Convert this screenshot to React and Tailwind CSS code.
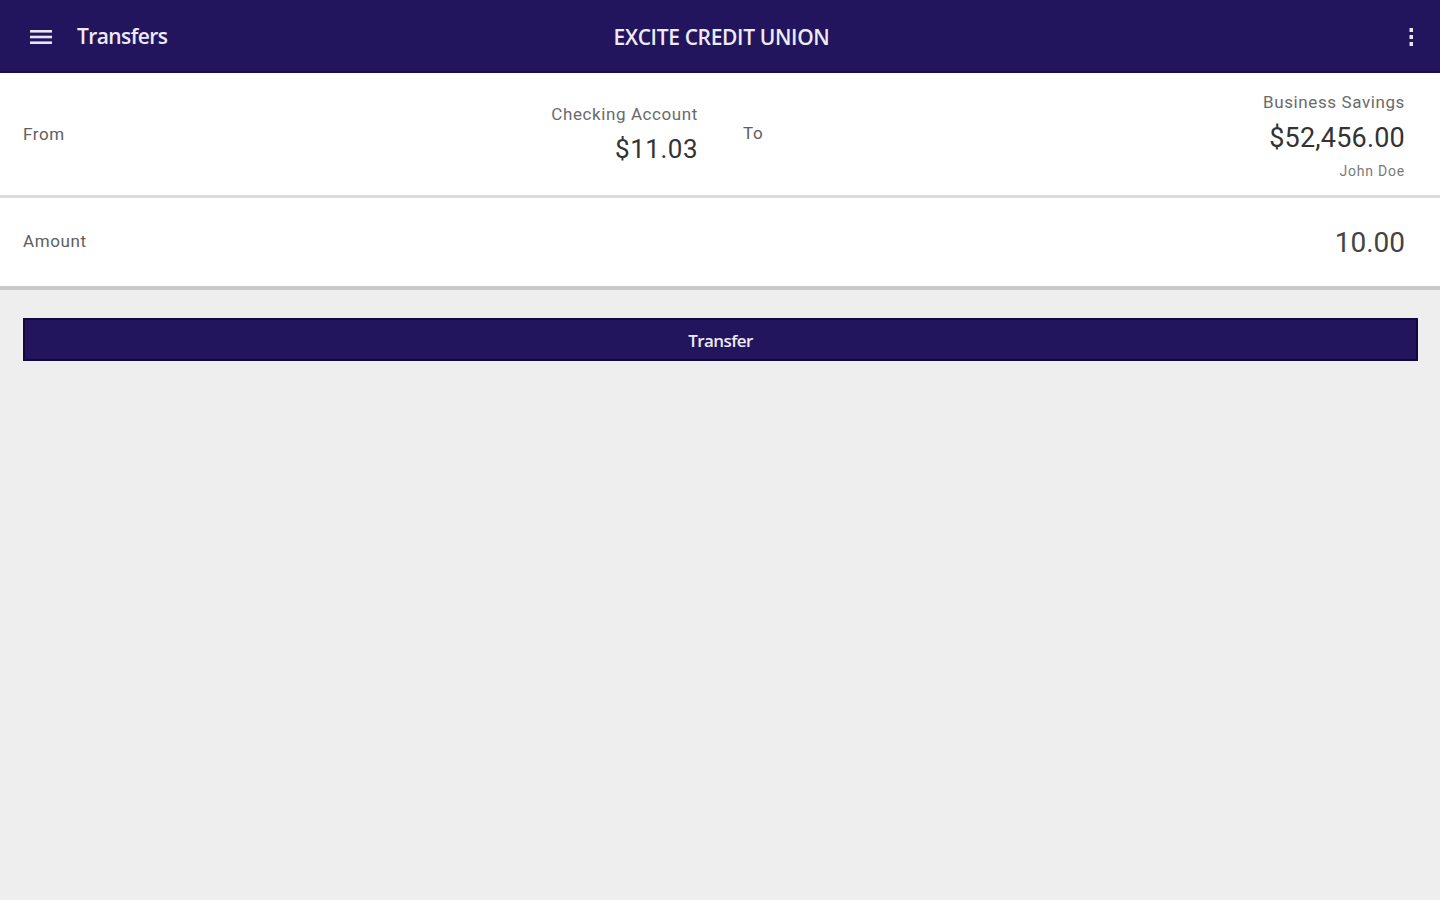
import React from 'react';

const MenuIcon = () => (
  <svg width="22" height="18" viewBox="0 0 22 18" fill="#e8e6f0">
    <rect x="0" y="2" width="22" height="2.6" />
    <rect x="0" y="7.7" width="22" height="2.6" />
    <rect x="0" y="13.4" width="22" height="2.6" />
  </svg>
);

const MoreIcon = () => (
  <svg width="6" height="20" viewBox="0 0 6 20" fill="#e8e6f0">
    <rect x="1.5" y="1" width="3.5" height="4" />
    <rect x="1.5" y="8" width="3.5" height="4" />
    <rect x="1.5" y="15" width="3.5" height="4" />
  </svg>
);

export default function App() {
  return (
    <div className="w-screen min-h-screen bg-[#eeeeee] font-['Roboto','Liberation_Sans',sans-serif]">
      {/* Top bar */}
      <header className="h-[73px] bg-[#23145e] border-b-2 border-[#1b0f4d] flex items-center px-[30px] relative">
        <div className="mt-[2px]">
          <MenuIcon />
        </div>
        <span className="ml-[25px] mt-[3px] text-[21px] font-semibold tracking-[-0.6px] text-[#ecebf3] font-['Open_Sans','Liberation_Sans',sans-serif]">
          Transfers
        </span>
        <div className="absolute left-0 right-0 top-0 h-[71px] flex items-center justify-center pointer-events-none">
          <span className="ml-[3px] mt-[4px] text-[21px] font-semibold tracking-[-0.35px] text-[#ecebf3] font-['Open_Sans','Liberation_Sans',sans-serif]">
            EXCITE CREDIT UNION
          </span>
        </div>
        <div className="ml-auto mr-[-4px] mt-[2px]">
          <MoreIcon />
        </div>
      </header>

      {/* From / To row */}
      <div className="bg-white h-[125px] grid grid-cols-2 border-b-[3px] border-[#dcdcdc]">
        <div className="flex items-center pl-[23px] pr-[22px]">
          <span className="text-[17px] tracking-[0.6px] text-[#5e5e5e] mt-[1px]">From</span>
          <div className="ml-auto flex flex-col items-end mt-[1px]">
            <span className="text-[17px] tracking-[0.6px] text-[#6a6a6a] leading-[20px]">Checking Account</span>
            <span className="text-[26px] text-[#333333] leading-[34px] mt-[8px] tracking-[0.5px]">$11.03</span>
          </div>
        </div>
        <div className="flex items-center pl-[23px] pr-[35px]">
          <span className="text-[17px] tracking-[0.6px] text-[#5e5e5e] mt-[-1px]">To</span>
          <div className="ml-auto flex flex-col items-end mt-[4px]">
            <span className="text-[17px] tracking-[0.6px] text-[#6a6a6a] leading-[20px]">Business Savings</span>
            <span className="text-[27px] tracking-[0.2px] text-[#333333] leading-[34px] mt-[9px]">$52,456.00</span>
            <span className="text-[14px] tracking-[0.8px] text-[#7a7a7a] leading-[18px] mt-[7px]">John Doe</span>
          </div>
        </div>
      </div>

      {/* Amount row */}
      <div className="bg-white h-[92px] flex items-center pl-[23px] pr-[35px] border-b-[4px] border-[#c8c8c8]">
        <span className="text-[17px] tracking-[0.6px] text-[#5e5e5e]">Amount</span>
        <span className="ml-auto text-[28px] text-[#444444] mt-[2px]">10.00</span>
      </div>

      {/* Transfer button */}
      <div className="px-[23px] pt-[28px]">
        <button className="w-[1395px] h-[43px] bg-[#23145e] border-[2px] border-[#14093f] flex items-center justify-center pt-[2px] text-[17px] font-semibold tracking-[-0.6px] text-[#ecebf3] font-['Open_Sans','Liberation_Sans',sans-serif]">
          Transfer
        </button>
      </div>
    </div>
  );
}
